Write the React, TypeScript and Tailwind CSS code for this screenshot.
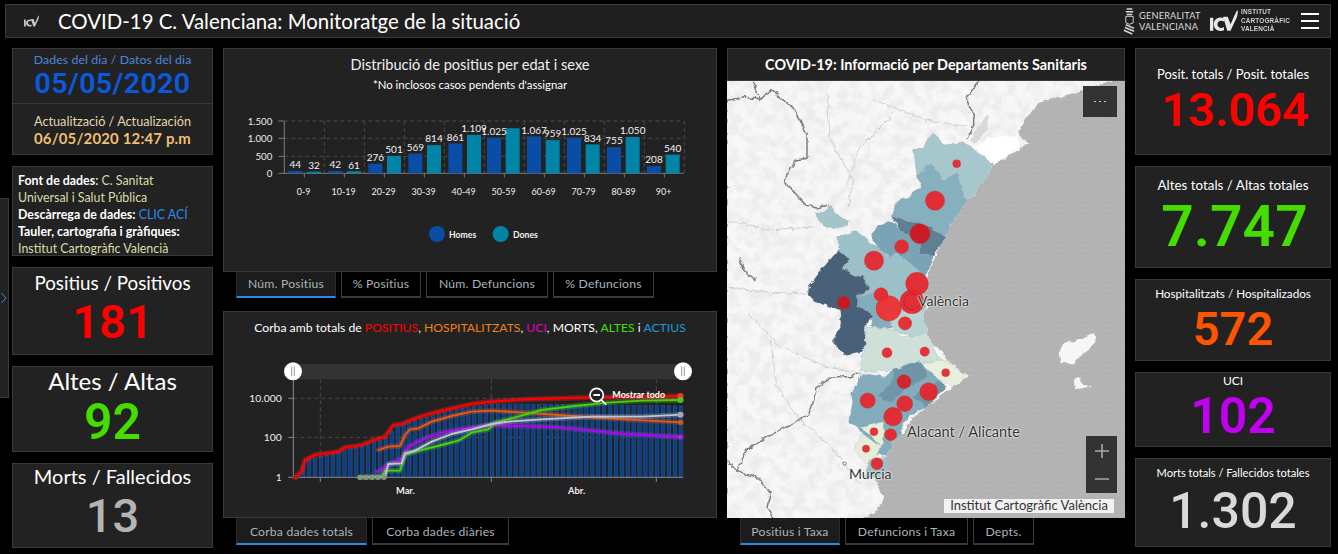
import React from "react";

const Tab = ({ label, w, active, low }: { label: string; w: string; active?: boolean; low?: boolean }) => (
  <div className={`${w} ${low ? "pt-[3px]" : "pt-[1px]"} flex items-center justify-center text-[12.2px] text-[#a9b4bb] tracking-[0.2px] border-x border-[#3a3a3a] ${active ? "bg-[#1c1c1c] border-b-2 border-b-[#2b8ce6] border-x-[#2a2a2a]" : "bg-black border-b-2 border-b-[#3a3a3a]"}`}>
    {label}
  </div>
);

const Stat = ({ h, label, value, labelCls, valueCls, pad }: { h: string; label: string; value: string; labelCls: string; valueCls: string; pad: string }) => (
  <div className={`${h} ${pad} bg-[#222222] border border-[#3a3a3a] flex flex-col items-center text-white`}>
    <div className={labelCls}>{label}</div>
    <div className={`font-[Roboto,sans-serif] ${valueCls}`}>{value}</div>
  </div>
);

const IcvMark = ({ cls, color }: { cls: string; color: string }) => (
  <svg viewBox="0 0 30 24" className={cls} fill={color}>
    <path d="M0 8h3.500v14H0z" />
    <path d="M15 8.500v3.500c-3-1.800-7-1-7 3s4 5 7 3v3.500c-5 2-11-.5-11-6.500s6-8.500 11-6.500z" />
    <path d="M14 7h5l3 8 4-9 3-6 1 1-1 6-7 15h-3.500z" />
  </svg>
);

const HOMES = [44, 42, 276, 569, 861, 1025, 1067, 1025, 755, 208];
const DONES = [32, 61, 501, 814, 1109, 1300, 959, 834, 1050, 540];
const DLAB = ["32", "61", "501", "814", "1.109", "", "959", "834", "1.050", "540"];
const HLAB = ["44", "42", "276", "569", "861", "1.025", "1.067", "1.025", "755", "208"];
const AGES = ["0-9", "10-19", "20-29", "30-39", "40-49", "50-59", "60-69", "70-79", "80-89", "90+"];

const BarChart = () => {
  const base = 235;
  const k = 156 / 1500;
  return (
    <svg viewBox="-6 15 1482 450" className="w-[494px] h-[150px] block" fontFamily="Lato, sans-serif">
      {[78, 130, 184].map((y) => (
        <line key={y} x1="178" x2="1376" y1={y} y2={y} stroke="#4a4a4a" strokeWidth="3" strokeDasharray="12 9" />
      ))}
      {Array.from({ length: 11 }).map((_, i) => (
        <line key={i} x1={178 + i * 120} x2={178 + i * 120} y1="78" y2="235" stroke="#4a4a4a" strokeWidth="3" strokeDasharray="12 9" />
      ))}
      <line x1="178" x2="178" y1="78" y2="235" stroke="#777" strokeWidth="3" />
      <line x1="160" x2="1376" y1={base} y2={base} stroke="#777" strokeWidth="3" />
      {[78, 130, 184].map((y) => (
        <line key={y} x1="160" x2="178" y1={y} y2={y} stroke="#777" strokeWidth="3" />
      ))}
      {Array.from({ length: 10 }).map((_, i) => (
        <line key={i} x1={238 + i * 120} x2={238 + i * 120} y1="235" y2="247" stroke="#777" strokeWidth="3" />
      ))}
      {[["1.500", 90], ["1.000", 142], ["500", 195], ["0", 246]].map(([t, y]) => (
        <text key={t} x="142" y={y} textAnchor="end" fontSize="29" fill="#eee">{t}</text>
      ))}
      {HOMES.map((v, i) => {
        const off = i >= 5 ? -4 : 0;
        const x1 = 190 + i * 120 + off;
        const x2 = 246 + i * 120 + off;
        const hh = Math.max(v * k, 7);
        const dh = Math.max(DONES[i] * k, 5);
        return (
          <g key={i}>
            <rect x={x1} y={base - hh} width="42" height={hh} fill="#0a4da6" />
            <rect x={x2} y={base - dh} width="42" height={dh} fill="#0085a8" />
            <text x={x1 + 21} y={base - hh - 8} textAnchor="middle" fontSize="30" fill="#f2f2f2">{HLAB[i]}</text>
            {DLAB[i] && <text x={x2 + 21} y={base - dh - 8} textAnchor="middle" fontSize="30" fill="#f2f2f2">{DLAB[i]}</text>}
            <text x={236 + i * 120} y="299" textAnchor="middle" fontSize="27" fill="#eee">{AGES[i]}</text>
          </g>
        );
      })}
      <circle cx="636" cy="417" r="24" fill="#0a4da6" />
      <text x="672" y="428" fontSize="26" fontWeight="700" fill="#f2f2f2">Homes</text>
      <circle cx="827" cy="417" r="24" fill="#0085a8" />
      <text x="864" y="428" fontSize="26" fontWeight="700" fill="#f2f2f2">Dones</text>
    </svg>
  );
};

type P = [number, number];
const pts = (a: P[]) => a.map((p) => p.join(",")).join(" ");
const RED: P[] = [[210,502],[230,485],[240,450],[270,435],[340,425],[360,412],[410,405],[440,392],[480,380],[505,345],[530,342],[570,325],[620,310],[680,295],[740,282],[800,275],[900,268],[1000,265],[1100,262],[1370,258]];
const ORANGE: P[] = [[460,420],[490,410],[525,408],[540,375],[555,358],[580,355],[620,335],[680,318],[740,305],[800,302],[900,308],[1000,315],[1100,322],[1200,328],[1370,337]];
const PURPLE: P[] = [[455,485],[470,480],[480,470],[530,445],[550,410],[600,385],[650,368],[720,355],[800,345],[850,348],[900,348],[1000,352],[1100,362],[1200,372],[1370,381]];
const GREY: P[] = [[405,502],[480,500],[490,462],[530,460],[540,430],[570,422],[620,395],[680,372],[740,358],[800,342],[850,335],[950,328],[1100,320],[1250,320],[1370,314]];
const GREEN: P[] = [[405,502],[470,500],[480,482],[525,482],[540,435],[570,425],[650,405],[700,392],[740,368],[790,358],[810,338],[870,322],[950,300],[1050,288],[1150,278],[1250,272],[1370,270]];
const ACT: P[] = [[210,502],[240,450],[340,425],[410,405],[480,385],[505,350],[570,330],[680,300],[800,282],[1000,283],[1370,288]];
const interp = (a: P[], x: number) => {
  for (let i = 1; i < a.length; i++) {
    if (x <= a[i][0]) {
      const t = (x - a[i - 1][0]) / (a[i][0] - a[i - 1][0]);
      return a[i - 1][1] + t * (a[i][1] - a[i - 1][1]);
    }
  }
  return a[a.length - 1][1];
};

const Curve = ({ d, c, glow, w = 5.5 }: { d: P[]; c: string; glow: string; w?: number }) => (
  <g>
    <polyline points={pts(d)} fill="none" stroke={glow} strokeWidth="16" strokeOpacity="0.33" strokeLinejoin="round" strokeLinecap="round" />
    <polyline points={pts(d)} fill="none" stroke={c} strokeWidth={w} strokeLinejoin="round" strokeLinecap="round" />
  </g>
);

const LineChart = () => {
  const bars = Array.from({ length: 66 }).map((_, i) => 212 + i * 17.7);
  return (
    <svg viewBox="-6 135 1482 450" className="w-[494px] h-[150px] block" fontFamily="Lato, sans-serif">
      <rect x="205" y="162" width="1170" height="46" fill="#333333" />
      {[265, 382].map((y) => (
        <line key={y} x1="205" x2="1375" y1={y} y2={y} stroke="#4a4a4a" strokeWidth="3" strokeDasharray="12 9" />
      ))}
      {[286, 799, 1294].map((x) => (
        <line key={x} x1={x} x2={x} y1="208" y2="502" stroke="#4a4a4a" strokeWidth="3" strokeDasharray="12 9" />
      ))}
      {bars.map((x) => {
        const y = interp(ACT, x);
        return <rect key={x} x={x} y={y} width="10" height={502 - y} fill="#0e3f80" stroke="#1f5aa6" strokeWidth="1.500" />;
      })}
      <line x1="205" x2="205" y1="208" y2="502" stroke="#888" strokeWidth="3" />
      <line x1="190" x2="1375" y1="502" y2="502" stroke="#888" strokeWidth="3" />
      {[265, 382].map((y) => <line key={y} x1="190" x2="205" y1={y} y2={y} stroke="#888" strokeWidth="3" />)}
      {[286, 799, 1294].map((x) => <line key={x} x1={x} x2={x} y1="502" y2="516" stroke="#888" strokeWidth="3" />)}
      <text x="170" y="276" textAnchor="end" fontSize="31" fill="#f0f0f0">10.000</text>
      <text x="170" y="393" textAnchor="end" fontSize="31" fill="#f0f0f0">100</text>
      <text x="170" y="513" textAnchor="end" fontSize="31" fill="#f0f0f0">1</text>
      <text x="541" y="552" textAnchor="middle" fontSize="28" fontWeight="700" fill="#eee">Mar.</text>
      <text x="1055" y="552" textAnchor="middle" fontSize="28" fontWeight="700" fill="#eee">Abr.</text>
      <Curve d={ORANGE} c="#e65a14" glow="#d05020" />
      <Curve d={PURPLE} c="#b400ff" glow="#a040c0" />
      <Curve d={GREEN} c="#45d800" glow="#50b030" />
      <Curve d={GREY} c="#c4c4d6" glow="#a0a0a8" />
      <Curve d={RED} c="#ff0000" glow="#ff2020" w={6.500} />
      {[405, 423, 441, 459, 477].map((x) => <circle key={x} cx={x} cy="502" r="8" fill="#7f9a78" />)}
      <circle cx="212" cy="502" r="8" fill="#a02020" />
      <circle cx="1366" cy="258" r="9" fill="#ff3030" />
      <circle cx="1366" cy="270" r="9" fill="#55c020" />
      <circle cx="1366" cy="314" r="9" fill="#a8a8b0" />
      <circle cx="1366" cy="337" r="8" fill="#c05a30" />
      <circle cx="1366" cy="381" r="7" fill="#b020f0" />
      {[204, 1374].map((x) => (
        <g key={x}>
          <circle cx={x} cy="184" r="27" fill="#fff" />
          <path d={`M${x - 4} 170v28M${x + 4} 170v28`} stroke="#999" strokeWidth="3" />
        </g>
      ))}
      <circle cx="1115" cy="255" r="20" fill="#222" stroke="#fff" strokeWidth="5" />
      <rect x="1105" y="252" width="20" height="6" fill="#fff" />
      <line x1="1129" y1="270" x2="1144" y2="284" stroke="#fff" strokeWidth="5" />
      <text x="1162" y="264" fontSize="27" fontWeight="700" fill="#fff">Mostrar todo</text>
    </svg>
  );
};

const CIRCLES: [number, number, number, string?][] = [
  [689,251,12],[624,362,29],[579,461,30,"#d4141c"],[524,500,21],[441,542,29],[570,611,34],[462,644,21],
  [555,665,36],[485,685,38,"#f02c2c"],[350,668,19,"#d4141c"],[534,730,20],[480,818,15],[593,815,14],[656,878,12],
  [531,905,21,"#d81c24"],[605,935,27],[422,962,23],[533,971,24],[498,1010,28],[441,1055,12],[491,1064,18],[417,1106,11],[450,1151,18],
];

const REGIONS: [string, string][] = [
  ["#a6c7cb", "560,208 590,205 605,170 620,165 650,195 710,185 740,205 800,258 780,290 730,362 700,370 690,280 650,300 610,250 570,290"],
  ["#87b0bf", "570,290 610,250 650,300 690,280 710,350 730,365 705,395 660,475 610,440 530,420 490,405 510,365 555,345 585,310"],
  ["#5f7f94", "490,405 530,420 610,440 660,475 620,525 578,522 580,490 520,450"],
  ["#79a4b6", "430,462 460,435 495,425 520,450 580,490 578,522 620,525 595,590 550,550 510,520 490,535 450,500"],
  ["#a3c4c9", "265,398 300,392 308,372 320,400 368,425 345,445 290,440"],
  ["#9cc0c7", "333,470 380,455 415,465 430,495 450,500 490,535 510,520 550,550 595,590 600,640 590,720 520,740 430,720 395,680 390,650 425,625 405,585 385,590 345,565 365,535 335,510"],
  ["#83adbd", "390,650 440,640 470,700 520,735 470,745 430,740 435,705 395,680"],
  ["#b8d4d3", "470,700 590,690 605,760 560,770 500,750"],
  ["#4a6079", "335,510 365,535 345,565 385,590 405,585 425,625 390,650 395,680 435,705 415,740 415,795 400,815 350,825 315,780 345,730 340,690 262,665 243,645 245,620 290,560"],
  ["#cfe0d8", "415,745 490,745 530,770 605,760 612,790 650,845 580,845 500,870 400,875 405,830 415,800"],
  ["#e8efdc", "580,850 650,840 725,890 680,925 640,900 600,870"],
  ["#83adbd", "405,880 470,890 500,870 580,845 600,870 640,900 655,925 600,980 560,1000 530,1030 520,1080 480,1130 440,1120 400,1050 365,1025 380,920"],
  ["#6f94a8", "500,870 580,845 600,890 530,930 490,965 455,950 500,900"],
  ["#6f94a8", "555,950 640,900 655,925 600,980"],
  ["#e6edd8", "395,1040 470,1025 470,1090 460,1100 425,1060"],
  ["#e6edd8", "380,1110 405,1060 460,1100 440,1140 415,1150"],
  ["#9cc0c7", "430,1140 480,1130 480,1170 450,1200 410,1190"],
];

const MapSvg = () => (
  <svg viewBox="0 3 1194 1311" className="w-[398px] h-[437px] block" preserveAspectRatio="none">
    <defs>
      <pattern id="sea" width="36" height="15" patternUnits="userSpaceOnUse">
        <rect width="36" height="15" fill="#b4b4b4" />
        <path d="M0 8q9-6 18 0t18 0" fill="none" stroke="#adadad" strokeWidth="2" />
      </pattern>
      <filter id="mott" x="0" y="0" width="100%" height="100%">
        <feTurbulence type="fractalNoise" baseFrequency="0.03" numOctaves="4" seed="7" />
        <feColorMatrix type="matrix" values="0 0 0 0 0.82  0 0 0 0 0.82  0 0 0 0 0.82  3.4 0 0 0 -1.35" />
      </filter>
      <filter id="rough" x="-2%" y="-2%" width="104%" height="104%">
        <feTurbulence type="fractalNoise" baseFrequency="0.045" numOctaves="3" seed="3" result="n" />
        <feDisplacementMap in="SourceGraphic" in2="n" scale="16" xChannelSelector="R" yChannelSelector="G" />
      </filter>
      <clipPath id="land">
        <polygon points="0,0 1170,0 1000,50 930,70 870,160 900,190 860,220 820,240 790,270 740,340 680,420 650,480 610,560 590,640 600,680 590,720 600,750 610,790 640,810 660,840 725,890 680,920 640,950 600,980 560,1010 530,1060 500,1080 480,1130 480,1170 450,1200 470,1260 440,1300 400,1320 0,1320" />
      </clipPath>
    </defs>
    <rect x="0" y="0" width="1194" height="1320" fill="url(#sea)" />
    <g filter="url(#rough)">
      <g clipPath="url(#land)">
        <rect x="-20" y="-20" width="1240" height="1360" fill="#f7f7f7" />
        <rect x="-20" y="-20" width="1240" height="1360" filter="url(#mott)" opacity="0.85" />
        <polygon points="760,130 785,100 780,150 745,195 730,180" fill="#d8d8d8" />
        <polygon points="745,205 800,258 830,230 880,200 870,165 820,170 780,175" fill="#ffffff" />
        <g fill="none" stroke="#7d7d7d" strokeWidth="4.500">
          <polyline points="78,0 100,60 130,28 200,85 240,160 240,235 205,240 170,305 240,375 270,385 300,375" />
          <polyline points="0,65 50,50 100,60" />
          <polyline points="760,0 720,50 740,110 740,140 720,180" />
          <polyline points="0,1140 30,1170 100,1200 130,1240 120,1280 140,1320" />
          <polyline points="30,1170 60,1110 140,1060 200,1030 250,1000 270,920 320,890 370,890 400,880" />
          <polyline points="35,530 50,570 85,600" />
        </g>
        <g fill="none" stroke="#cfcfcf" strokeWidth="3">
          <polyline points="300,40 310,180 380,300 360,380" />
          <polyline points="0,420 120,450 270,440" />
          <polyline points="60,700 160,800 300,860 400,880" />
          <polyline points="130,780 150,920 210,1010 310,1100 400,1210" />
          <polyline points="440,60 600,120 720,140" />
          <polyline points="0,620 130,640 250,640" />
          <polyline points="500,100 400,200 360,320" />
        </g>
        {REGIONS.map(([c, p], i) => (
          <polygon key={i} points={p} fill={c} stroke="#8a9aa3" strokeWidth="1.200" strokeOpacity="0.6" />
        ))}
      </g>
      <polygon points="1000,850 995,815 1020,785 1060,780 1100,760 1105,790 1070,820 1040,850" fill="#f6f6f6" />
      <polygon points="1040,900 1060,892 1060,910 1095,920 1060,925 1045,928" fill="#f6f6f6" />
    </g>
    {CIRCLES.map(([x, y, r, c], i) => (
      <circle key={i} cx={x} cy={y} r={r} fill={c || "#e8232a"} fillOpacity="0.92" stroke="#b02a30" strokeOpacity="0.6" strokeWidth="1.500" />
    ))}
    <circle cx="555" cy="665" r="24" fill="none" stroke="#a02028" strokeWidth="1.500" />
    <circle cx="353" cy="1151" r="5" fill="#f7f7f7" stroke="#444" strokeWidth="2" />
  </svg>
);

export default function App() {
  return (
    <div className="w-[1338px] h-[554px] bg-black overflow-hidden relative font-[Lato,sans-serif] pt-[4px]">
      <div className="absolute left-0 top-[198px] w-[9px] h-[200px] bg-[#222222] border-y border-r border-[#3a3a3a] flex items-center justify-center">
        <svg viewBox="0 0 6 12" className="w-[6px] h-[12px]" fill="none" stroke="#2b8ce6" strokeWidth="1">
          <path d="M0.500 1l4.500 5-4.500 5" />
        </svg>
      </div>

      <header className="ml-[5px] w-[1326px] h-[34px] bg-[#1f1f1f] border border-[#3a3a3a] flex items-center">
        <IcvMark cls="ml-[18px] w-[15px] h-[13px]" color="#c8c8c8" />
        <h1 className="ml-[19px] text-[20.4px] leading-none text-white font-normal whitespace-nowrap">COVID-19 C. Valenciana: Monitoratge de la situació</h1>
        <div className="ml-auto flex items-center">
          <svg viewBox="0 0 14 30" className="w-[13px] h-[30px]" fill="none" stroke="#d8d8d8">
            <path d="M4 2h6M3 5h8M4 8h6" strokeWidth="1.500" />
            <path d="M3 10h8v7q-4 3-8 0z" strokeWidth="1" />
            <path d="M3 19l9 4M2 22l10 4M1 25l9 4" strokeWidth="1.600" />
          </svg>
          <div className="ml-[3px] w-[60px] text-[9.200px] leading-[11px] tracking-[0.2px] text-[#dcdcdc] font-normal whitespace-nowrap">
            <div>GENERALITAT</div>
            <div>VALENCIANA</div>
          </div>
          <IcvMark cls="ml-[11px] w-[28px] h-[23px]" color="#e8e8e8" />
          <div className="ml-[3px] font-['Liberation_Sans'] text-[8px] leading-[8.500px] text-[#cfcfcf] font-bold tracking-[0.2px] scale-x-[0.8] origin-left w-[38px] whitespace-nowrap">
            <div>INSTITUT</div>
            <div>CARTOGRÀFIC</div>
            <div>VALENCIÀ</div>
          </div>
          <div className="ml-[22px] mr-[11px] w-[18px] flex flex-col gap-[5px]">
            <div className="h-[2px] bg-white" />
            <div className="h-[2px] bg-white" />
            <div className="h-[2px] bg-white" />
          </div>
        </div>
      </header>

      <main className="mt-[10px] ml-[12px] flex gap-[10px]">
        <section className="w-[201px] flex flex-col gap-[11px]">
          <div className="h-[107px] bg-[#222222] border border-[#3a3a3a] flex flex-col">
            <div className="h-[55px] flex flex-col items-center border-b border-[#3a3a3a] pt-[2px]">
              <div className="text-[12.300px] leading-[17px] text-[#4f86dc] tracking-[0.1px]">Dades del dia / Datos del dia</div>
              <div className="font-[Roboto,sans-serif] font-semibold text-[28.500px] leading-[32px] tracking-[0.4px] text-[#0a5ae0]">05/05/2020</div>
            </div>
            <div className="flex flex-col items-center pt-[9px]">
              <div className="text-[12.700px] leading-[16px] text-[#e6d8a8]">Actualització / Actualización</div>
              <div className="text-[14.900px] leading-[18px] font-bold text-[#f0bf70] tracking-[0.2px]">06/05/2020 12:47 p.m</div>
            </div>
          </div>

          <div className="h-[90px] bg-[#222222] border border-[#3a3a3a] pl-[5px] pt-[5px] text-[12.400px] leading-[17px] text-[#dcdca8] overflow-hidden whitespace-nowrap">
            <div><b className="text-white">Font de dades</b><span className="text-white">:</span> C. Sanitat</div>
            <div>Universal i Salut Pública</div>
            <div><b className="text-white">Descàrrega de dades:</b> <span className="text-[#2a8cf0]">CLIC ACÍ</span></div>
            <div><b className="text-white">Tauler, cartografia i gràfiques:</b></div>
            <div>Institut Cartogràfic Valencià</div>
          </div>

          <Stat h="h-[88px]" pad="pt-[3px]" label="Positius / Positivos" value="181" labelCls="text-[18.800px] leading-[23px]" valueCls="font-semibold text-[47px] leading-[55px] text-[#ff0000]" />
          <Stat h="h-[86px]" pad="pt-0" label="Altes / Altas" value="92" labelCls="text-[24px] leading-[27px]" valueCls="font-semibold text-[50px] leading-[56px] text-[#45dc00]" />
          <Stat h="h-[85px]" pad="pt-[1px]" label="Morts / Fallecidos" value="13" labelCls="text-[20px] leading-[23px]" valueCls="font-medium text-[47px] leading-[55px] text-[#b4b4b4]" />
        </section>

        <section className="w-[494px] flex flex-col">
          <div className="h-[224px] bg-[#222222] border border-[#3a3a3a] flex flex-col items-center">
            <div className="mt-[7px] text-[14.600px] leading-[17px] text-[#f0f0f0]">Distribució de positius per edat i sexe</div>
            <div className="mt-[5px] text-[11.400px] leading-[14px] text-white">*No inclosos casos pendents d'assignar</div>
            <div className="mt-[8px] -mx-px"><BarChart /></div>
          </div>
          <div className="h-[26px] ml-[13px] flex gap-[5px]">
            <Tab label="Núm. Positius" w="w-[100px]" active />
            <Tab label="% Positius" w="w-[80px]" />
            <Tab label="Núm. Defuncions" w="w-[122px]" />
            <Tab label="% Defuncions" w="w-[101px]" />
          </div>

          <div className="mt-[13px] h-[207px] bg-[#222222] border border-[#3a3a3a] flex flex-col items-center">
            <div className="mt-[8px] text-[12.200px] leading-[16px] text-white whitespace-nowrap">
              Corba amb totals de <span className="text-[#ff0000]">POSITIUS</span>, <span className="text-[#f08010]">HOSPITALITZATS</span>, <span className="text-[#e000c0]">UCI</span>, MORTS, <span className="text-[#40e000]">ALTES</span> i <span className="text-[#1e9ad8]">ACTIUS</span>
            </div>
            <div className="mt-[19px] -mx-px"><LineChart /></div>
          </div>
          <div className="h-[27px] ml-[13px] flex gap-[5px]">
            <Tab low label="Corba dades totals" w="w-[131px]" active />
            <Tab low label="Corba dades diàries" w="w-[137px]" />
          </div>
        </section>

        <section className="w-[398px] flex flex-col">
          <div className="h-[33px] bg-[#222222] border border-[#3a3a3a] flex items-center justify-center text-[14.400px] font-bold text-white whitespace-nowrap">
            COVID-19: Informació per Departaments Sanitaris
          </div>
          <div className="relative h-[437px] overflow-hidden">
            <MapSvg />
            <div className="absolute right-[8px] top-[5px] w-[34px] h-[31px] bg-[#333333] flex items-center justify-center">
              <span className="w-[2px] h-[1px] bg-[#ccc]" />
              <span className="w-[2px] h-[1px] bg-[#ccc] mx-[3px]" />
              <span className="w-[2px] h-[1px] bg-[#ccc]" />
            </div>
            <div className="absolute right-[8px] top-[355px] w-[31px] h-[57px] bg-[#333333] flex flex-col items-center justify-center text-[#a8a8a8]">
              <svg viewBox="0 0 14 42" className="w-[14px] h-[42px]" stroke="currentColor" strokeWidth="1.600">
                <path d="M0 7h14M7 0v14M0 35h14" />
              </svg>
            </div>
            <span className="absolute left-[191px] top-[211px] text-[14px] leading-[18px] text-[#333] [text-shadow:0_0_2px_#fff,0_0_2px_#fff]">València</span>
            <span className="absolute left-[180px] top-[342px] text-[14.500px] leading-[18px] text-[#333] [text-shadow:0_0_2px_#fff,0_0_2px_#fff] whitespace-nowrap">Alacant / Alicante</span>
            <span className="absolute left-[122px] top-[384px] text-[14px] leading-[18px] text-[#333] [text-shadow:0_0_2px_#fff,0_0_2px_#fff]">Murcia</span>
            <div className="absolute left-[217px] top-[418px] w-[170px] h-[14px] bg-[#f2f2f2] flex items-center justify-center text-[13px] text-[#333] whitespace-nowrap">Institut Cartogràfic València</div>
          </div>
          <div className="h-[27px] ml-[13px] flex gap-[5px]">
            <Tab low label="Positius i Taxa" w="w-[100px]" active />
            <Tab low label="Defuncions i Taxa" w="w-[123px]" />
            <Tab low label="Depts." w="w-[61px]" />
          </div>
        </section>

        <section className="w-[196px] flex flex-col gap-[11px]">
          <Stat h="h-[107px]" pad="pt-[17px]" label="Posit. totals / Posit. totales" value="13.064" labelCls="text-[13px] leading-[17px]" valueCls="font-semibold pl-[4px] text-[47px] leading-[54px] text-[#ff0000]" />
          <Stat h="h-[102px]" pad="pt-[10px]" label="Altes totals / Altas totales" value="7.747" labelCls="text-[13.400px] leading-[17px]" valueCls="font-semibold pl-[3px] text-[57px] leading-[66px] text-[#45dc00]" />
          <Stat h="h-[82px]" pad="pt-[6px]" label="Hospitalitzats / Hospitalizados" value="572" labelCls="text-[11.700px] leading-[15px]" valueCls="font-semibold text-[47px] leading-[56px] text-[#ff5500]" />
          <Stat h="h-[75px]" pad="pt-0" label="UCI" value="102" labelCls="text-[12px] leading-[15px]" valueCls="font-semibold text-[50px] leading-[56px] text-[#c000f0]" />
          <Stat h="h-[89px]" pad="pt-[6px]" label="Morts totals / Fallecidos totales" value="1.302" labelCls="text-[11.100px] leading-[15px]" valueCls="font-medium text-[50px] leading-[62px] text-[#d9d9d9]" />
        </section>
      </main>
    </div>
  );
}
